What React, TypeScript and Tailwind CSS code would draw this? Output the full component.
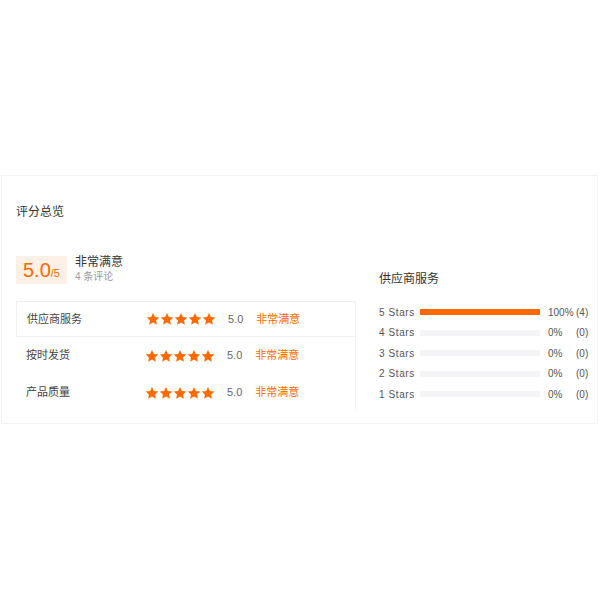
import React from 'react';

const font = { fontFamily: '"Liberation Sans", "Noto Sans CJK SC", sans-serif' };

const Star = () => (
  <svg width="14" height="14" viewBox="0 0 24 24" className="shrink-0">
    <path
      d="M12 1.5l3.2 6.9 7.5.9-5.5 5.2 1.4 7.4L12 18.2l-6.6 3.7 1.4-7.4L1.3 9.3l7.5-.9z"
      fill="#ff6a00"
    />
  </svg>
);

const rows = [
  { name: '供应商服务', score: '5.0', active: true },
  { name: '按时发货', score: '5.0', active: false },
  { name: '产品质量', score: '5.0', active: false },
];

const dist = [
  { label: '5 Stars', pct: 100, count: 4 },
  { label: '4 Stars', pct: 0, count: 0 },
  { label: '3 Stars', pct: 0, count: 0 },
  { label: '2 Stars', pct: 0, count: 0 },
  { label: '1 Stars', pct: 0, count: 0 },
];

export default function App() {
  return (
    <div className="w-[600px] h-[600px] bg-white pt-[175px]" style={font}>
      <div className="ml-[1px] mr-[2px] h-[249px] border border-[#f3f3f3] pl-[14px] pr-[2px] pt-[28px]">
        <div className="text-[12px] leading-[16px] text-[#333]">评分总览</div>

        <div className="flex">
          {/* left: summary + per-item scores */}
          <div className="w-[340px] shrink-0">
            <div className="mt-[36px] flex items-center">
              <div className="h-[28px] w-[51px] bg-[#fdf0e6] flex items-baseline justify-center pt-[2px]">
                <span className="text-[20px] leading-[24px] text-[#ff6a00]">5.0</span>
                <span className="text-[11px] text-[#ff6a00]">/5</span>
              </div>
              <div className="ml-[8px] -mt-[2px]">
                <div className="text-[12px] leading-[16px] text-[#333]">非常满意</div>
                <div className="text-[10px] leading-[14px] text-[#999]">4 条评论</div>
              </div>
            </div>

            <div className="mt-[17px] border-r border-[#f3f3f3]">
              {rows.map((r) => (
                <div
                  key={r.name}
                  className={`flex items-center pl-[10px] ${
                    r.active ? 'h-[36px] border border-[#f0f0f0] -mr-px' : 'h-[37px]'
                  }`}
                >
                  <span className="w-[119px] text-[11px] text-[#444]">{r.name}</span>
                  <div className="flex">
                    {[0, 1, 2, 3, 4].map((i) => (
                      <Star key={i} />
                    ))}
                  </div>
                  <span className="ml-[12px] text-[11px] text-[#666]">{r.score}</span>
                  <span className="ml-[13px] text-[11px] text-[#ff6a00]">非常满意</span>
                </div>
              ))}
            </div>
          </div>

          {/* right: star distribution */}
          <div className="ml-[23px] pt-[51px] shrink-0">
            <div className="text-[12px] leading-[16px] text-[#333]">供应商服务</div>
            <div className="mt-[15px]">
              {dist.map((d) => (
                <div key={d.label} className="flex items-center h-[20.5px] text-[10px] text-[#555]">
                  <span className="w-[41px] tracking-[0.6px]">{d.label}</span>
                  <div className="w-[120px] h-[6px] bg-[#f4f4f6]">
                    <div className="h-full bg-[#ff6a00]" style={{ width: `${d.pct}%` }} />
                  </div>
                  <span className="ml-[8px] w-[28px]">{d.pct}%</span>
                  <span>({d.count})</span>
                </div>
              ))}
            </div>
          </div>
        </div>
      </div>
    </div>
  );
}
